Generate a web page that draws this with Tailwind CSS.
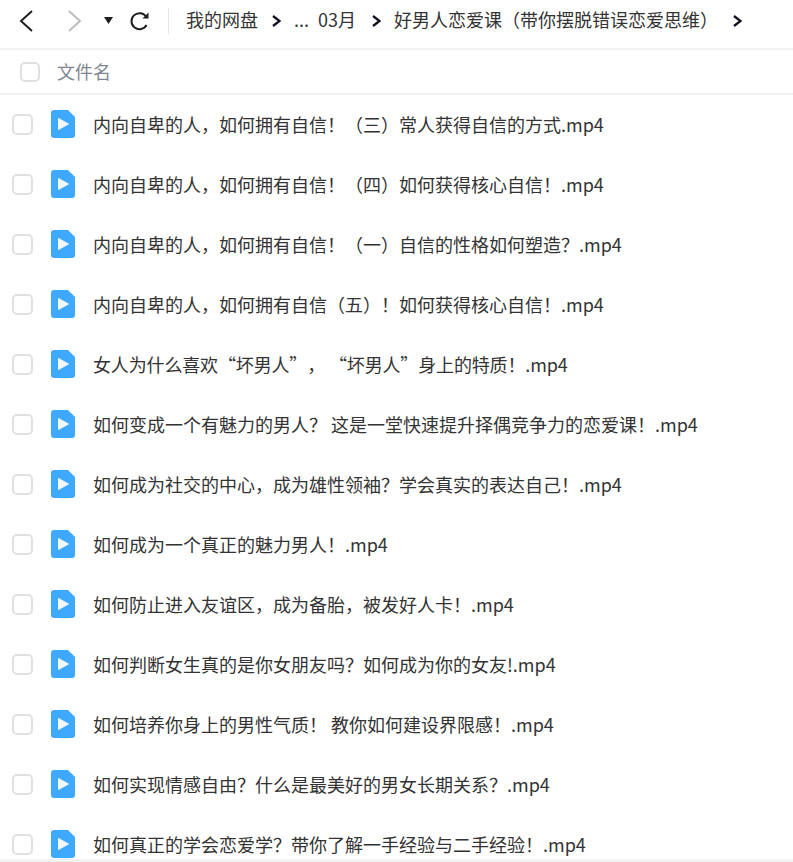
<!DOCTYPE html>
<html lang="zh"><head><meta charset="utf-8"><script src="https://cdn.jsdelivr.net/npm/@tailwindcss/browser@4"></script></head>
<body class="bg-white">
<div class="h-[862px] w-[793px] overflow-hidden flex flex-col font-['Noto_Sans_CJK_SC','Noto_Sans',sans-serif] text-[#333]">
  <div class="h-[50px] shrink-0 border-b-2 border-[#f2f2f2] flex items-center pb-[7px] text-[18px]">
    <svg class="ml-[19px] w-[15px] h-[22px]" viewBox="0 0 15 22" fill="none" stroke="#1f1f1f" stroke-width="2"><path d="M13 1 2 11l11 10"/></svg>
    <svg class="ml-[33px] w-[15px] h-[22px]" viewBox="0 0 15 22" fill="none" stroke="#bdbdbd" stroke-width="2"><path d="M2 1l11 10L2 21"/></svg>
    <svg class="ml-[22px] w-[9px] h-[7px]" viewBox="0 0 9 7" fill="#1f1f1f"><path d="M0 0h9L4.500 7z"/></svg>
    <svg class="ml-[17px] w-[20px] h-[20px]" viewBox="0 0 20 20" fill="none" stroke="#1f1f1f" stroke-width="2"><path d="M16.5 14a8 8 0 1 1-.5-8.500"/><path d="M18.500 1.500v6h-6z" fill="#1f1f1f" stroke="none"/></svg>
    <div class="ml-[18px] w-px h-[26px] bg-[#e6e6e6]"></div>
    <span class="ml-[17px] pb-[3px]">我的网盘</span>
    <svg class="ml-[14px] w-[9px] h-[12px]" viewBox="0 0 9 12" fill="none" stroke="#111122" stroke-width="2.300"><path d="M1 1l6.500 5L1 11"/></svg>
    <span class="ml-[13px] pb-[3px]">...</span>
    <span class="ml-[9px] pb-[3px]">03月</span>
    <svg class="ml-[16px] w-[9px] h-[12px]" viewBox="0 0 9 12" fill="none" stroke="#111122" stroke-width="2.300"><path d="M1 1l6.500 5L1 11"/></svg>
    <span class="ml-[13px] pb-[3px]">好男人恋爱课（带你摆脱错误恋爱思维）</span>
    <svg class="ml-[15px] w-[9px] h-[12px]" viewBox="0 0 9 12" fill="none" stroke="#111122" stroke-width="2.300"><path d="M1 1l6.500 5L1 11"/></svg>
  </div>
  <div class="h-[45px] shrink-0 border-b-2 border-[#f2f2f2] flex items-center">
    <div class="ml-[20px] w-[20px] h-[20px] rounded-[5px] border-2 border-[#e0e0e0]"></div>
    <span class="ml-[17px] text-[18px] text-[#80868f]">文件名</span>
  </div>
  <div class="flex-1 min-h-0 -mt-px overflow-hidden">
    <div class="h-[60px] flex items-center"><div class="ml-[12px] w-[21px] h-[21px] rounded-[5px] border-2 border-[#e0e0e0]"></div><svg class="ml-[18px] w-[24px] h-[28px]" viewBox="0 0 24 28"><path d="M3 0h14l7 7v18a3 3 0 0 1-3 3H3a3 3 0 0 1-3-3V3a3 3 0 0 1 3-3z" fill="#3fa9ff"/><path d="M7.500 8.500 17.500 14 7.500 19.500z" fill="#f2f9ff" stroke="#f2f9ff" stroke-width="1"/></svg><span class="ml-[18px] text-[18px] whitespace-nowrap">内向自卑的人，如何拥有自信！（三）常人获得自信的方式.mp4</span></div>
    <div class="h-[60px] flex items-center"><div class="ml-[12px] w-[21px] h-[21px] rounded-[5px] border-2 border-[#e0e0e0]"></div><svg class="ml-[18px] w-[24px] h-[28px]" viewBox="0 0 24 28"><path d="M3 0h14l7 7v18a3 3 0 0 1-3 3H3a3 3 0 0 1-3-3V3a3 3 0 0 1 3-3z" fill="#3fa9ff"/><path d="M7.500 8.500 17.500 14 7.500 19.500z" fill="#f2f9ff" stroke="#f2f9ff" stroke-width="1"/></svg><span class="ml-[18px] text-[18px] whitespace-nowrap">内向自卑的人，如何拥有自信！（四）如何获得核心自信！.mp4</span></div>
    <div class="h-[60px] flex items-center"><div class="ml-[12px] w-[21px] h-[21px] rounded-[5px] border-2 border-[#e0e0e0]"></div><svg class="ml-[18px] w-[24px] h-[28px]" viewBox="0 0 24 28"><path d="M3 0h14l7 7v18a3 3 0 0 1-3 3H3a3 3 0 0 1-3-3V3a3 3 0 0 1 3-3z" fill="#3fa9ff"/><path d="M7.500 8.500 17.500 14 7.500 19.500z" fill="#f2f9ff" stroke="#f2f9ff" stroke-width="1"/></svg><span class="ml-[18px] text-[18px] whitespace-nowrap">内向自卑的人，如何拥有自信！（一）自信的性格如何塑造？.mp4</span></div>
    <div class="h-[60px] flex items-center"><div class="ml-[12px] w-[21px] h-[21px] rounded-[5px] border-2 border-[#e0e0e0]"></div><svg class="ml-[18px] w-[24px] h-[28px]" viewBox="0 0 24 28"><path d="M3 0h14l7 7v18a3 3 0 0 1-3 3H3a3 3 0 0 1-3-3V3a3 3 0 0 1 3-3z" fill="#3fa9ff"/><path d="M7.500 8.500 17.500 14 7.500 19.500z" fill="#f2f9ff" stroke="#f2f9ff" stroke-width="1"/></svg><span class="ml-[18px] text-[18px] whitespace-nowrap">内向自卑的人，如何拥有自信（五）！如何获得核心自信！.mp4</span></div>
    <div class="h-[60px] flex items-center"><div class="ml-[12px] w-[21px] h-[21px] rounded-[5px] border-2 border-[#e0e0e0]"></div><svg class="ml-[18px] w-[24px] h-[28px]" viewBox="0 0 24 28"><path d="M3 0h14l7 7v18a3 3 0 0 1-3 3H3a3 3 0 0 1-3-3V3a3 3 0 0 1 3-3z" fill="#3fa9ff"/><path d="M7.500 8.500 17.500 14 7.500 19.500z" fill="#f2f9ff" stroke="#f2f9ff" stroke-width="1"/></svg><span class="ml-[18px] text-[18px] whitespace-nowrap [text-spacing-trim:space-all] tracking-[-0.15px]">女人为什么喜欢“坏男人”， “坏男人”身上的特质！.mp4</span></div>
    <div class="h-[60px] flex items-center"><div class="ml-[12px] w-[21px] h-[21px] rounded-[5px] border-2 border-[#e0e0e0]"></div><svg class="ml-[18px] w-[24px] h-[28px]" viewBox="0 0 24 28"><path d="M3 0h14l7 7v18a3 3 0 0 1-3 3H3a3 3 0 0 1-3-3V3a3 3 0 0 1 3-3z" fill="#3fa9ff"/><path d="M7.500 8.500 17.500 14 7.500 19.500z" fill="#f2f9ff" stroke="#f2f9ff" stroke-width="1"/></svg><span class="ml-[18px] text-[18px] whitespace-nowrap">如何变成一个有魅力的男人？ 这是一堂快速提升择偶竞争力的恋爱课！.mp4</span></div>
    <div class="h-[60px] flex items-center"><div class="ml-[12px] w-[21px] h-[21px] rounded-[5px] border-2 border-[#e0e0e0]"></div><svg class="ml-[18px] w-[24px] h-[28px]" viewBox="0 0 24 28"><path d="M3 0h14l7 7v18a3 3 0 0 1-3 3H3a3 3 0 0 1-3-3V3a3 3 0 0 1 3-3z" fill="#3fa9ff"/><path d="M7.500 8.500 17.500 14 7.500 19.500z" fill="#f2f9ff" stroke="#f2f9ff" stroke-width="1"/></svg><span class="ml-[18px] text-[18px] whitespace-nowrap">如何成为社交的中心，成为雄性领袖？学会真实的表达自己！.mp4</span></div>
    <div class="h-[60px] flex items-center"><div class="ml-[12px] w-[21px] h-[21px] rounded-[5px] border-2 border-[#e0e0e0]"></div><svg class="ml-[18px] w-[24px] h-[28px]" viewBox="0 0 24 28"><path d="M3 0h14l7 7v18a3 3 0 0 1-3 3H3a3 3 0 0 1-3-3V3a3 3 0 0 1 3-3z" fill="#3fa9ff"/><path d="M7.500 8.500 17.500 14 7.500 19.500z" fill="#f2f9ff" stroke="#f2f9ff" stroke-width="1"/></svg><span class="ml-[18px] text-[18px] whitespace-nowrap">如何成为一个真正的魅力男人！.mp4</span></div>
    <div class="h-[60px] flex items-center"><div class="ml-[12px] w-[21px] h-[21px] rounded-[5px] border-2 border-[#e0e0e0]"></div><svg class="ml-[18px] w-[24px] h-[28px]" viewBox="0 0 24 28"><path d="M3 0h14l7 7v18a3 3 0 0 1-3 3H3a3 3 0 0 1-3-3V3a3 3 0 0 1 3-3z" fill="#3fa9ff"/><path d="M7.500 8.500 17.500 14 7.500 19.500z" fill="#f2f9ff" stroke="#f2f9ff" stroke-width="1"/></svg><span class="ml-[18px] text-[18px] whitespace-nowrap">如何防止进入友谊区，成为备胎，被发好人卡！.mp4</span></div>
    <div class="h-[60px] flex items-center"><div class="ml-[12px] w-[21px] h-[21px] rounded-[5px] border-2 border-[#e0e0e0]"></div><svg class="ml-[18px] w-[24px] h-[28px]" viewBox="0 0 24 28"><path d="M3 0h14l7 7v18a3 3 0 0 1-3 3H3a3 3 0 0 1-3-3V3a3 3 0 0 1 3-3z" fill="#3fa9ff"/><path d="M7.500 8.500 17.500 14 7.500 19.500z" fill="#f2f9ff" stroke="#f2f9ff" stroke-width="1"/></svg><span class="ml-[18px] text-[18px] whitespace-nowrap">如何判断女生真的是你女朋友吗？如何成为你的女友!.mp4</span></div>
    <div class="h-[60px] flex items-center"><div class="ml-[12px] w-[21px] h-[21px] rounded-[5px] border-2 border-[#e0e0e0]"></div><svg class="ml-[18px] w-[24px] h-[28px]" viewBox="0 0 24 28"><path d="M3 0h14l7 7v18a3 3 0 0 1-3 3H3a3 3 0 0 1-3-3V3a3 3 0 0 1 3-3z" fill="#3fa9ff"/><path d="M7.500 8.500 17.500 14 7.500 19.500z" fill="#f2f9ff" stroke="#f2f9ff" stroke-width="1"/></svg><span class="ml-[18px] text-[18px] whitespace-nowrap">如何培养你身上的男性气质！ 教你如何建设界限感！.mp4</span></div>
    <div class="h-[60px] flex items-center"><div class="ml-[12px] w-[21px] h-[21px] rounded-[5px] border-2 border-[#e0e0e0]"></div><svg class="ml-[18px] w-[24px] h-[28px]" viewBox="0 0 24 28"><path d="M3 0h14l7 7v18a3 3 0 0 1-3 3H3a3 3 0 0 1-3-3V3a3 3 0 0 1 3-3z" fill="#3fa9ff"/><path d="M7.500 8.500 17.500 14 7.500 19.500z" fill="#f2f9ff" stroke="#f2f9ff" stroke-width="1"/></svg><span class="ml-[18px] text-[18px] whitespace-nowrap">如何实现情感自由？什么是最美好的男女长期关系？.mp4</span></div>
    <div class="h-[60px] flex items-center"><div class="ml-[12px] w-[21px] h-[21px] rounded-[5px] border-2 border-[#e0e0e0]"></div><svg class="ml-[18px] w-[24px] h-[28px]" viewBox="0 0 24 28"><path d="M3 0h14l7 7v18a3 3 0 0 1-3 3H3a3 3 0 0 1-3-3V3a3 3 0 0 1 3-3z" fill="#3fa9ff"/><path d="M7.500 8.500 17.500 14 7.500 19.500z" fill="#f2f9ff" stroke="#f2f9ff" stroke-width="1"/></svg><span class="ml-[18px] text-[18px] whitespace-nowrap">如何真正的学会恋爱学？带你了解一手经验与二手经验！.mp4</span></div>
  </div>
  <div class="h-[3px] shrink-0 bg-[#f2f2f2]"></div>
</div>
</body></html>
